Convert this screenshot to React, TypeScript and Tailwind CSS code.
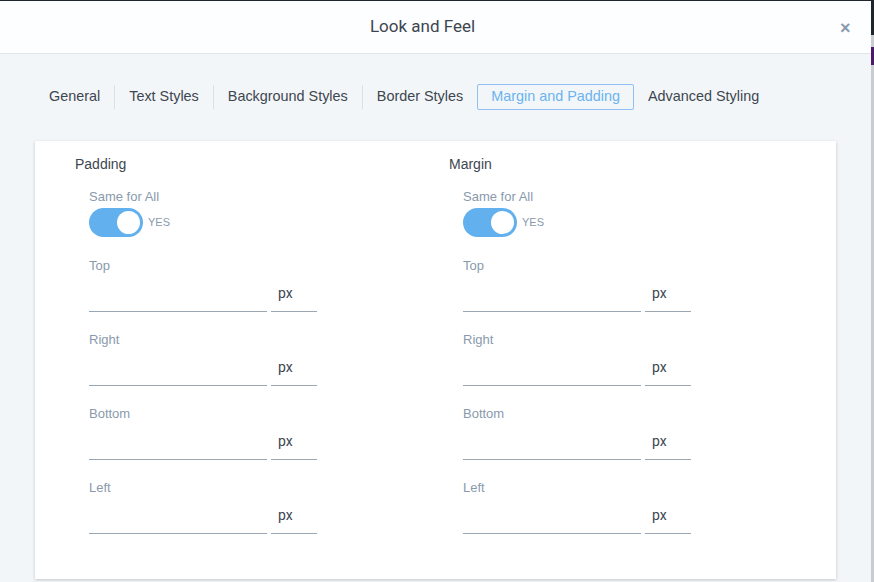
import React from "react";

const tabs = ["General", "Text Styles", "Background Styles", "Border Styles", "Margin and Padding", "Advanced Styling"];
const active = 4;

function Field({ label }: { label: string }) {
  return (
    <div className="pl-[14px] h-[74px]">
      <div className="text-[13px] leading-[16px] text-[#8a9aad]">{label}</div>
      <div className="mt-[4px] flex gap-[4px]">
        <div className="w-[178px] h-[34px] border-b border-[#9aa6b2]"></div>
        <div className="w-[46px] h-[34px] border-b border-[#9aa6b2] flex items-center pl-[7px] pb-[2px] text-[14px] text-[#3d4650] font-['Roboto',sans-serif]">
          px
        </div>
      </div>
    </div>
  );
}

function Column({ title }: { title: string }) {
  return (
    <div className="w-[374px]">
      <div className="text-[14px] leading-[20px] text-[#3d4650]">{title}</div>
      <div className="pl-[14px] mt-[15px]">
        <div className="text-[13px] leading-[16px] text-[#8a9aad]">Same for All</div>
        <div className="mt-[3px] flex items-center">
          <div className="w-[54px] h-[29px] rounded-full bg-[#62b1ee] flex items-center justify-end pr-[3px]">
            <div className="w-[23px] h-[23px] rounded-full bg-white"></div>
          </div>
          <span className="ml-[5px] text-[11px] text-[#8a9aad]">YES</span>
        </div>
      </div>
      <div className="mt-[21px]">
        <Field label="Top" />
        <Field label="Right" />
        <Field label="Bottom" />
        <Field label="Left" />
      </div>
    </div>
  );
}

export default function App() {
  return (
    <div className="w-[874px] h-[582px] flex bg-[#1e252c] font-['Liberation_Sans',Arial,sans-serif] overflow-hidden">
      <div className="w-[871px] mt-[1px] flex flex-col bg-[#f3f6f8]">
        <div className="h-[53px] bg-[#fdfeff] border-b border-[#e3e6e8] flex items-center relative">
          <div className="w-[845px] text-center text-[17px] text-[#3d4650] font-['Roboto',sans-serif]">Look and Feel</div>
          <div className="absolute left-[840px] top-[14px] text-[18px] font-bold text-[#8a9aad]">×</div>
        </div>
        <div className="px-[35px]">
          <div className="mt-[30px] flex items-center h-[26px]">
            {tabs.map((t, i) => {
              const sep = i > 0 && i !== active && i !== active + 1;
              if (i === active) {
                return (
                  <div key={t} className="h-[26px] px-[13px] flex items-center border border-[#8fbff5] rounded-[2px] text-[14.4px] text-[#6ab4ef]">
                    {t}
                  </div>
                );
              }
              return (
                <div key={t} className="flex items-center h-[24px]">
                  {sep && <div className="w-px h-[24px] bg-[#dde1e5]"></div>}
                  <div className="px-[14px] text-[14.4px] text-[#3d4650]">{t}</div>
                </div>
              );
            })}
          </div>
          <div className="mt-[31px] w-[801px] h-[438px] bg-white shadow-[0_1px_3px_rgba(0,0,0,0.2)] pt-[13px] pl-[40px] flex">
            <Column title="Padding" />
            <Column title="Margin" />
          </div>
        </div>
      </div>
      <div className="w-[3px] flex flex-col">
        <div className="h-[35px] bg-[#1e252c]"></div>
        <div className="h-[12px] bg-[#c9ccd0]"></div>
        <div className="h-[18px] bg-[#4b1a6a]"></div>
        <div className="flex-1 bg-[#c9ccd0]"></div>
      </div>
    </div>
  );
}
